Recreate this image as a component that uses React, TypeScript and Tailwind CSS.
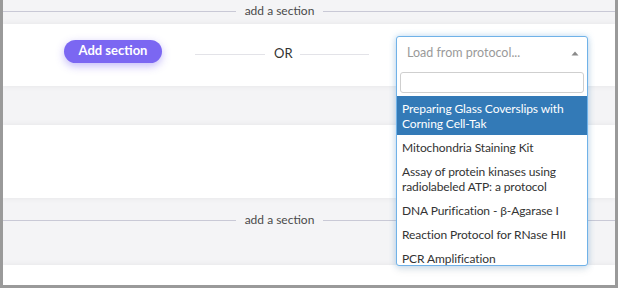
import React from "react";

const items: string[][] = [
  ["Preparing Glass Coverslips with", "Corning Cell-Tak"],
  ["Mitochondria Staining Kit"],
  ["Assay of protein kinases using", "radiolabeled ATP: a protocol"],
  ["DNA Purification - β-Agarase I"],
  ["Reaction Protocol for RNase HII"],
  ["PCR Amplification"],
];

function Divider() {
  return (
    <div className="flex items-center">
      <div className="w-[233px] h-px bg-[#c9c9d6]" />
      <div className="w-[87px] text-center text-[12px] leading-[14px] text-[#4a4a4a]">add a section</div>
      <div className="flex-1 h-px bg-[#c9c9d6]" />
    </div>
  );
}

export default function App() {
  return (
    <div className="relative w-[618px] h-[288px] overflow-hidden border-x-[3px] border-b-[3px] border-[#9a9a9a] bg-[#f4f4f6] font-['Lato',sans-serif]">
      <div className="h-[24px] pt-[4px]">
        <Divider />
      </div>
      <div className="relative z-10 h-[62px] bg-white shadow-[0_0_6px_rgba(0,0,0,0.07)] flex items-center pl-[61px]">
        <button className="mt-[-8px] w-[98px] h-[23px] rounded-full bg-[#7b67f2] text-white text-[13px] font-bold shadow-[0_3px_8px_rgba(123,103,242,0.45)]">
          Add section
        </button>
        <div className="ml-[33px] mt-[-4px] flex items-center">
          <div className="w-[70px] h-px bg-[#e3e3e8] mt-[3px]" />
          <span className="ml-[9px] mr-[7px] text-[13px] leading-[16px] text-[#333]">OR</span>
          <div className="w-[69px] h-px bg-[#e3e3e8] mt-[3px]" />
        </div>
      </div>
      <div className="h-[39px]" />
      <div className="relative z-10 h-[73px] bg-white shadow-[0_0_6px_rgba(0,0,0,0.07)]" />
      <div className="h-[67px] pt-[15px]">
        <Divider />
      </div>
      <div className="relative z-10 h-[22px] bg-white shadow-[0_0_6px_rgba(0,0,0,0.07)]" />

      <div className="absolute z-20 left-[393px] top-[36px] w-[192px] h-[230px] bg-white border border-[#70b2e8] rounded-[3px] shadow-[0_0_6px_rgba(102,175,233,0.45),0_4px_8px_rgba(0,0,0,0.08)] flex flex-col">
        <div className="h-[34px] pb-[2px] flex items-center justify-between pl-[10px] pr-[8px]">
          <span className="text-[12.5px] text-[#9a9a9a]">Load from protocol...</span>
          <svg width="8" height="5" viewBox="0 0 8 5">
            <path d="M4 0.5 L7.5 4.5 L0.5 4.5 Z" fill="#8a8a8a" />
          </svg>
        </div>
        <div className="px-[3px] pt-[1px]">
          <div className="h-[21px] border border-[#cfcfcf] rounded-[3px]" />
        </div>
        <div className="mt-[3px] flex-1 overflow-hidden">
          {items.map((lines, i) => (
            <div
              key={i}
              className={
                "px-[5px] py-[4.5px] text-[12px] leading-[15px] tracking-[-0.1px] " +
                (i === 0 ? "bg-[#337ab7] text-white" : "text-[#333]")
              }
            >
              {lines.map((l, j) => (
                <div key={j}>{l}</div>
              ))}
            </div>
          ))}
        </div>
      </div>
    </div>
  );
}
